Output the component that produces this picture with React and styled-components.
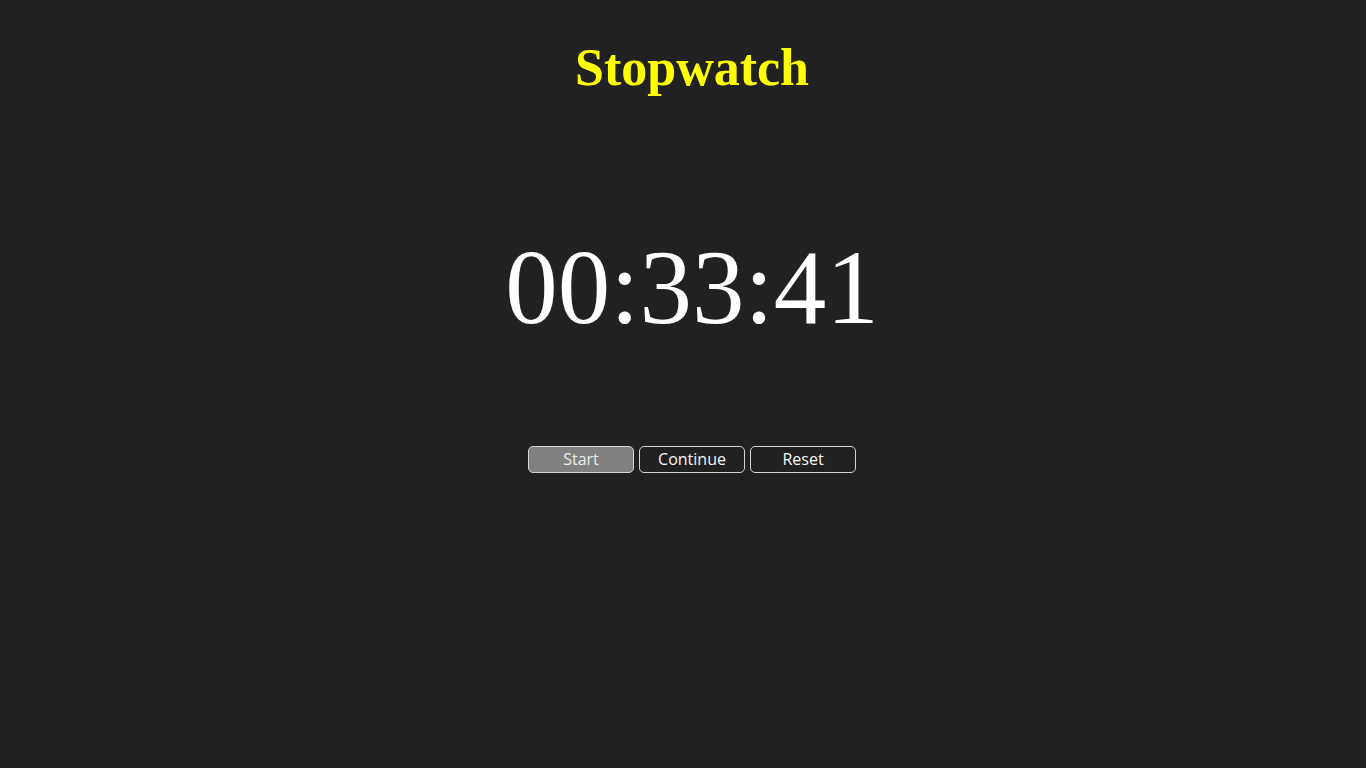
import React from 'react';
import styled, { createGlobalStyle } from "styled-components";

const GlobalStyle = createGlobalStyle`
    html, body {
        margin: 0;
        padding: 0;
        background-color: #212121;
    }
`;

const Container = styled.div`
    min-height: 768px;
    padding-left: 18px;
    display: flex;
    flex-direction: column;
    align-items: center;
    box-sizing: border-box;
`;

const Title = styled.h1`
    margin: 36px 0 0;
    font-family: "Liberation Serif", "Times New Roman", serif;
    font-weight: 700;
    font-size: 52px;
    line-height: 64px;
    color: #ffff00;
`;

const Display = styled.div`
    margin-top: 126px;
    font-family: "Liberation Serif", "Times New Roman", serif;
    font-size: 105px;
    line-height: 124px;
    color: #ffffff;
`;

const Controls = styled.div`
    display: flex;
    gap: 5px;
    margin-top: 96px;
`;

const Button = styled.button`
    width: 106px;
    height: 27px;
    padding: 0;
    border: 1px solid #d4d4d4;
    border-radius: 5px;
    background-color: ${(p) => (p.active ? '#808080' : '#212121')};
    color: ${(p) => (p.active ? '#ececec' : '#f6f6f6')};
    font-family: "Open Sans", "Noto Sans", sans-serif;
    font-size: 16px;
    line-height: 25px;
    cursor: pointer;
`;

const App = () => {
    return (
        <Container>
            <GlobalStyle />
            <Title>Stopwatch</Title>
            <Display>00:33:41</Display>
            <Controls>
                <Button active>Start</Button>
                <Button>Continue</Button>
                <Button>Reset</Button>
            </Controls>
        </Container>
    );
};

export default App;
